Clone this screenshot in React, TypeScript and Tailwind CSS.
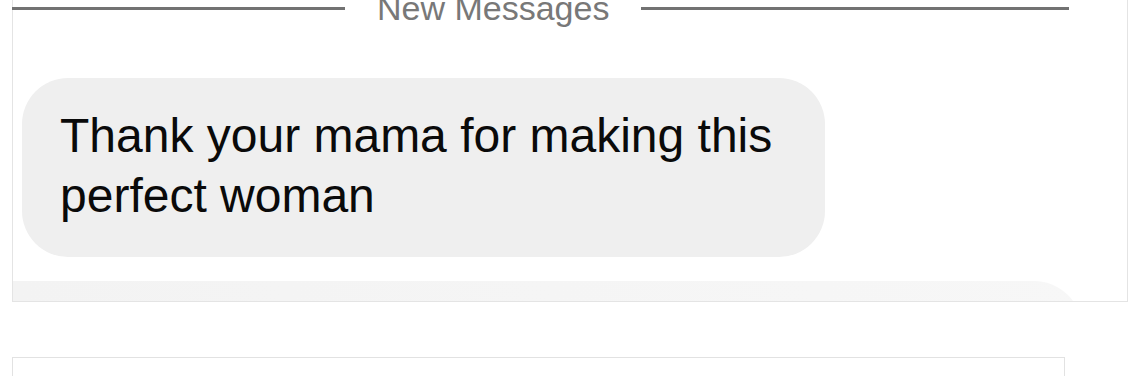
export default function App() {
  return (
    <div className="w-[1129px] h-[376px] overflow-hidden bg-white" style={{ fontFamily: '"Liberation Sans", Arial, sans-serif' }}>
      {/* Message panel */}
      <div className="ml-[12px] w-[1116px] h-[302px] flex flex-col border-x border-b border-[#e4e4e4]">
        {/* New Messages divider */}
        <div className="-mt-[8px] -ml-[1px] h-[33px] flex items-center gap-[32px] shrink-0">
          <div className="w-[333px] h-[3px] bg-[#727272]" />
          <span className="text-[34px] leading-[33px] text-[#787878] whitespace-nowrap">New Messages</span>
          <div className="w-[428px] h-[3px] bg-[#727272]" />
        </div>

        {/* Incoming bubble */}
        <div className="mt-[53px] ml-[9px] w-[803px] h-[179px] shrink-0 rounded-[46px] bg-[#efefef] pl-[38px] pr-[38px] pt-[28px]">
          <p className="text-[48px] leading-[60px] text-[#0a0a0a]">
            Thank your mama for making this perfect woman
          </p>
        </div>

        {/* Next bubble, cut off */}
        <div className="mt-[24px] h-[20px] shrink-0 overflow-hidden">
          <div className="w-[1069px] h-[90px] rounded-tr-[48px] bg-gradient-to-r from-[#f3f3f3] to-[#f7f7f7]" />
        </div>
      </div>

      {/* Input box */}
      <div className="mt-[55px] ml-[12px] w-[1053px] h-[40px] border border-[#e2e2e2]" />
    </div>
  );
}
